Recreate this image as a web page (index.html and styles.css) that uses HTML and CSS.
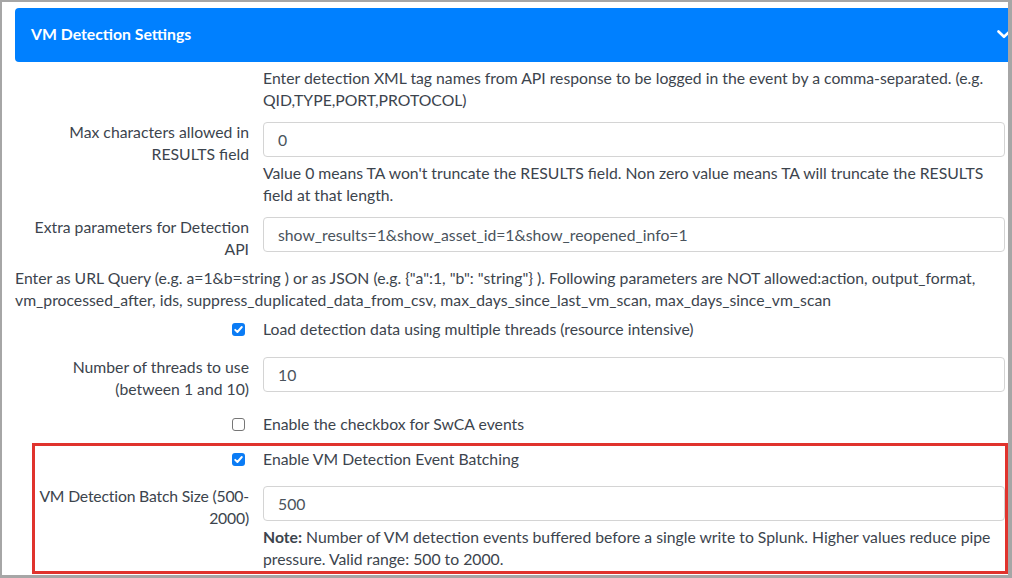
FILE: index.html
```html
<!DOCTYPE html>
<html>
<head>
<meta charset="utf-8">
<link rel="stylesheet" href="styles.css">
</head>
<body>
<div class="frame">
  <div class="content">
    <div class="panel-header">
      <span class="panel-title">VM Detection Settings</span>
      <svg class="chevron" width="14" height="9" viewBox="0 0 14 9"><path d="M1.5 1.5 L7 6.8 L12.5 1.5" fill="none" stroke="#fff" stroke-width="2.6" stroke-linecap="round" stroke-linejoin="round"/></svg>
    </div>

    <div class="row help-row">
      <div></div>
      <div class="help">Enter detection XML tag names from API response to be logged in the event by a comma-separated. (e.g. QID,TYPE,PORT,PROTOCOL)</div>
    </div>

    <div class="row r1">
      <label class="label">Max characters allowed in RESULTS field</label>
      <div class="control">
        <div class="input">0</div>
        <div class="help after-input">Value 0 means TA won't truncate the RESULTS field. Non zero value means TA will truncate the RESULTS field at that length.</div>
      </div>
    </div>

    <div class="row r2">
      <label class="label">Extra parameters for Detection API</label>
      <div class="control">
        <div class="input">show_results=1&amp;show_asset_id=1&amp;show_reopened_info=1</div>
      </div>
    </div>

    <div class="full-help">Enter as URL Query (e.g. a=1&amp;b=string ) or as JSON (e.g. {"a":1, "b": "string"} ). Following parameters are NOT allowed:action, output_format, vm_processed_after, ids, suppress_duplicated_data_from_csv, max_days_since_last_vm_scan, max_days_since_vm_scan</div>

    <div class="row check-row c1">
      <div class="check-cell"><span class="checkbox checked"><svg width="13" height="13" viewBox="0 0 13 13"><path d="M3.2 6.8 L5.4 9 L9.8 4" fill="none" stroke="#fff" stroke-width="1.9" stroke-linecap="round" stroke-linejoin="round"/></svg></span></div>
      <div class="check-text">Load detection data using multiple threads (resource intensive)</div>
    </div>

    <div class="row r3">
      <label class="label">Number of threads to use (between 1 and 10)</label>
      <div class="control">
        <div class="input">10</div>
      </div>
    </div>

    <div class="row check-row c2">
      <div class="check-cell"><span class="checkbox"></span></div>
      <div class="check-text">Enable the checkbox for SwCA events</div>
    </div>

    <div class="highlight">
      <div class="row boxed check-row c3">
        <div class="check-cell"><span class="checkbox checked"><svg width="13" height="13" viewBox="0 0 13 13"><path d="M3.2 6.8 L5.4 9 L9.8 4" fill="none" stroke="#fff" stroke-width="1.9" stroke-linecap="round" stroke-linejoin="round"/></svg></span></div>
        <div class="check-text">Enable VM Detection Event Batching</div>
      </div>
      <div class="row boxed r4">
        <label class="label tight">VM Detection Batch Size (500-2000)</label>
        <div class="control">
          <div class="input">500</div>
          <div class="help after-input note"><strong>Note:</strong> Number of VM detection events buffered before a single write to Splunk. Higher values reduce pipe pressure. Valid range: 500 to 2000.</div>
        </div>
      </div>
    </div>
  </div>
</div>
</body>
</html>
```

FILE: styles.css
```css
* { box-sizing: border-box; }
html, body { margin: 0; padding: 0; background: #fff; }
body {
  font-family: "Lato", "Liberation Sans", sans-serif;
  font-size: 15.75px;
  line-height: 22px;
  color: #3c444d;
}
.frame {
  width: 1012px;
  height: 578px;
  border-style: solid;
  border-color: #a6a6a6;
  border-width: 2px 4px 3px 2px;
  overflow: hidden;
  background: #fff;
}
.content {
  padding: 6px 3px 0 13px;
}
.panel-header {
  height: 54px;
  margin-right: -18px;
  background: #0080ff;
  border-radius: 4px;
  display: flex;
  align-items: center;
  padding: 0 12px 0 16px;
  color: #fff;
}
.panel-title {
  font-weight: 700;
  font-size: 15.8px;
  margin-top: -2px;
}
.chevron { margin-left: auto; margin-top: -2px; }

.row {
  display: grid;
  grid-template-columns: 234px 1fr;
  column-gap: 14px;
}
.row.boxed { grid-template-columns: 214px 1fr; }

.label {
  text-align: right;
  display: block;
}
.label.tight { letter-spacing: -0.18px; }
.control { padding-top: 1px; }
.input {
  height: 35px;
  border: 1px solid #d4d4d4;
  border-radius: 4px;
  padding: 0 14px;
  display: flex;
  align-items: center;
  color: #4a535c;
}
.help.after-input { margin-top: 5px; }

.help-row { margin-top: 5px; }
.r1 { margin-top: 10px; }
.r2 { margin-top: 10px; }
.full-help { margin-top: 7px; }
.c1 { margin-top: 7px; }
.r3 { margin-top: 16px; }
.c2 { margin-top: 13px; }

.check-cell {
  display: flex;
  justify-content: flex-end;
  align-items: center;
  padding-right: 4px;
}
.checkbox {
  width: 13px;
  height: 13px;
  border-radius: 3px;
  border: 1px solid #767676;
  background: #fff;
  display: block;
}
.checkbox.checked {
  border: none;
  background: #0b7cf5;
}
.checkbox svg { display: block; }

.highlight {
  margin-top: 8px;
  margin-left: 17px;
  margin-right: -3px;
  border: 3px solid #e0332d;
  padding: 2px 0 1px;
}
.r4 { margin-top: 15px; }
.note strong { font-weight: 700; }
```
